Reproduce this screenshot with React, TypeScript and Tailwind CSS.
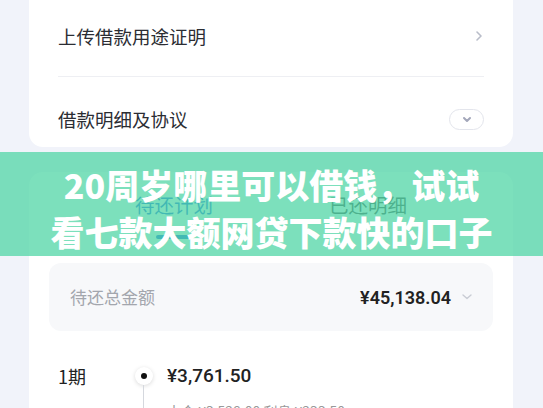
export default function App() {
  return (
    <div className="relative h-[408px] w-[543px] overflow-hidden bg-[#f1f3fa] font-['Noto_Sans_CJK_SC',sans-serif]">
      {/* top card */}
      <div className="ml-[29px] w-[484px] rounded-b-[14px] bg-white px-[29px]">
        <div className="flex h-[77px] items-center justify-between border-b border-[#eeeff3] pb-[4px]">
          <span className="text-[18.5px] leading-[26px] text-[#2b2d33]">上传借款用途证明</span>
          <svg width="8" height="12" viewBox="0 0 8 12" className="mr-[1px]">
            <path d="M2 2l4 4-4 4" fill="none" stroke="#b9bdc9" strokeWidth="1.6" strokeLinecap="round" strokeLinejoin="round" />
          </svg>
        </div>
        <div className="flex h-[70px] items-center justify-between pt-[14px]">
          <span className="text-[18.5px] leading-[26px] text-[#2b2d33]">借款明细及协议</span>
          <div className="flex h-[21px] w-[35px] items-center justify-center rounded-full border border-[#e3e5ec]">
            <svg width="10" height="7" viewBox="0 0 10 7">
              <path d="M2 2l3 3 3-3" fill="none" stroke="#a3a7ba" strokeWidth="2" strokeLinecap="round" strokeLinejoin="round" />
            </svg>
          </div>
        </div>
      </div>

      {/* second card */}
      <div className="ml-[29px] mt-[25px] h-[300px] w-[484px] rounded-t-[14px] bg-white pt-[19px]">
        <div className="grid grid-cols-2 px-12">
          <div className="flex flex-col items-center">
            <span className="text-[19.5px] leading-[27px] text-[#1a66dd]">待还计划</span>
            <div className="mt-[17px] h-[4px] w-[36px] rounded-full bg-[#1a66dd]" />
          </div>
          <div className="flex flex-col items-center">
            <span className="text-[19.5px] leading-[27px] text-[#444]">已还明细</span>
          </div>
        </div>
        <div className="mx-5 mt-[24px] flex h-[68px] items-center justify-between rounded-[12px] bg-[#f7f8fa] pl-[21px] pr-[20px]">
          <span className="text-[17px] text-[#a3a6ad]">待还总金额</span>
          <div className="flex items-center gap-[10px]">
            <span className="font-['Roboto',sans-serif] text-[18px] font-semibold text-[#222]">¥45,138.04</span>
            <svg width="12" height="8" viewBox="0 0 12 8">
              <path d="M2 2l4 3.5 4-3.5" fill="none" stroke="#c9ccd4" strokeWidth="1.4" strokeLinecap="round" strokeLinejoin="round" />
            </svg>
          </div>
        </div>
        <div className="mt-[32px] flex px-[29px]">
          <span className="w-[74px] text-[18px] leading-[26px] text-[#222]">1期</span>
          <div className="flex w-[23px] flex-col items-center">
            <div className="mt-[4px] flex h-[18px] w-[18px] items-center justify-center rounded-full bg-white shadow-[0_1px_4px_rgba(0,0,0,0.15)]">
              <div className="h-[6px] w-[6px] rounded-full bg-[#111]" />
            </div>
            <div className="h-[60px] w-px bg-[#d5d8de]" />
          </div>
          <div className="ml-[12px] flex flex-col">
            <span className="font-['Roboto',sans-serif] text-[19px] font-medium leading-[26px] text-[#222]">¥3,761.50</span>
            <span className="mt-[12px] text-[14px] text-[#999]">本金 ¥3,528.00 利息 ¥233.50</span>
          </div>
        </div>
      </div>

      {/* banner overlay */}
      <div className="absolute left-0 top-[152px] flex h-[104px] w-[543px] flex-col items-center justify-center bg-[#50d6a6]/75 pt-[8px]">
        <div className="text-center text-[34px] font-black leading-[47px] text-white">
          20周岁哪里可以借钱，试试
          <br />
          看七款大额网贷下款快的口子
        </div>
      </div>
    </div>
  );
}
